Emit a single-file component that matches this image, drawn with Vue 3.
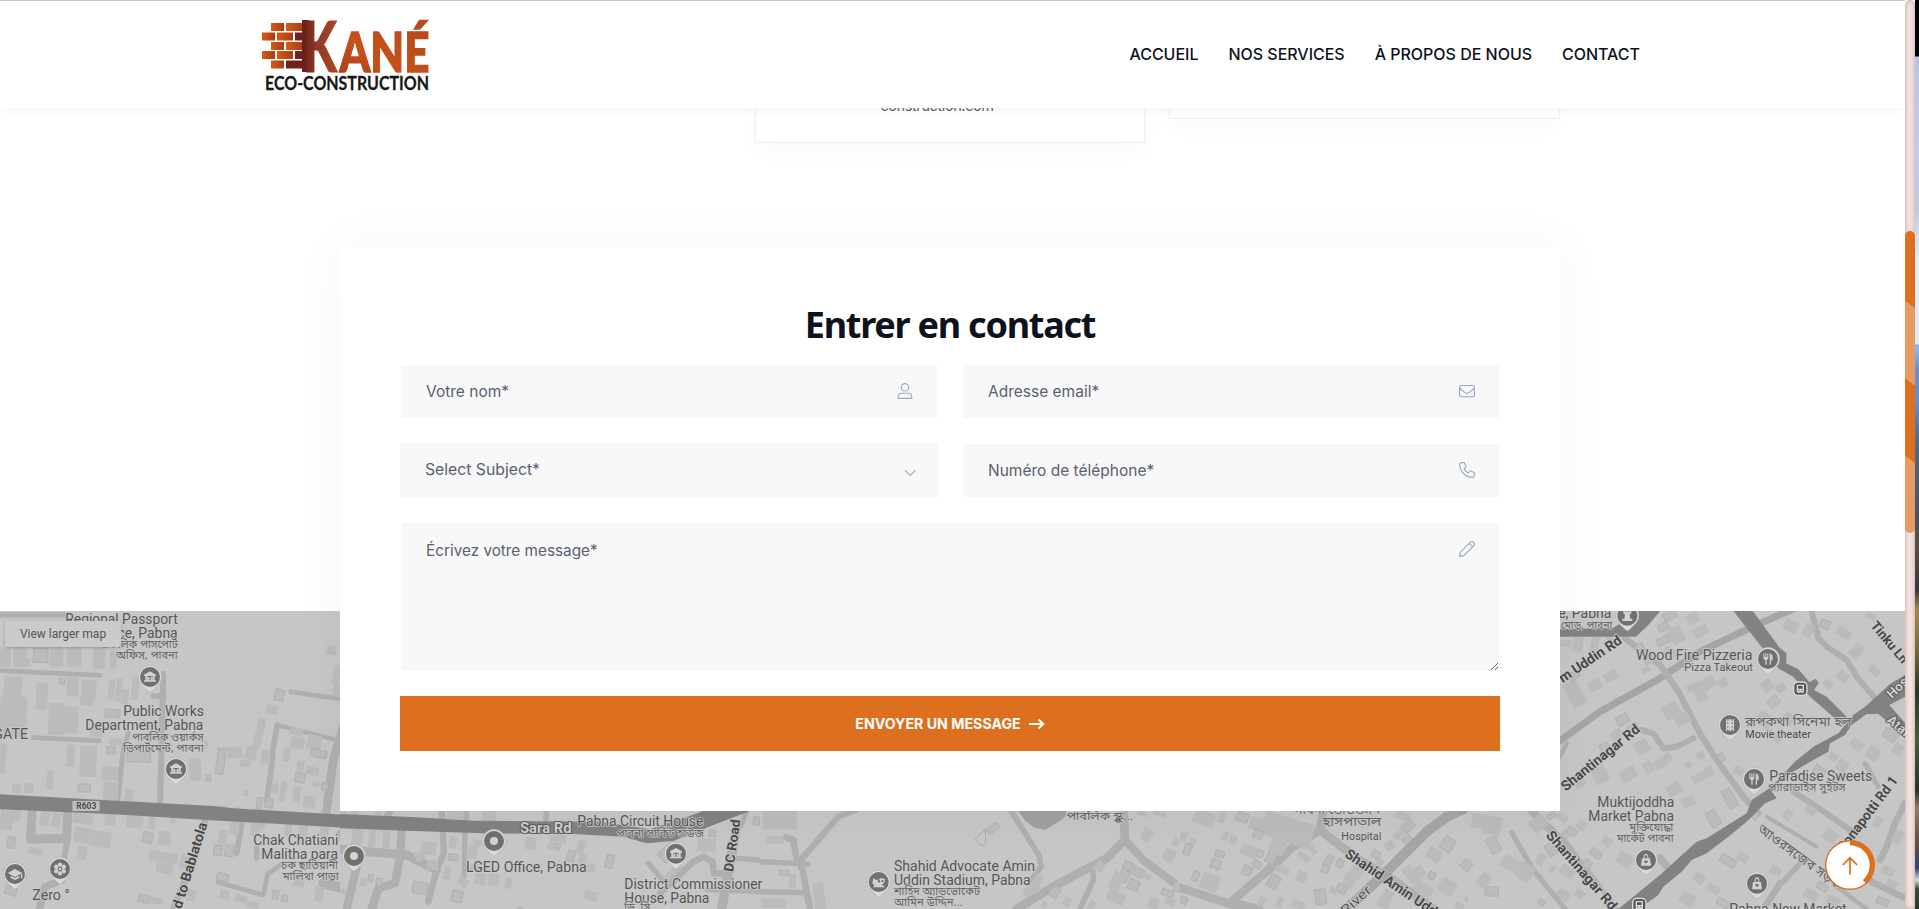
<script setup>
const nav = ['ACCUEIL', 'NOS SERVICES', 'À PROPOS DE NOUS', 'CONTACT']

const bricks = [
  [271, 23, 13, 0], [286, 23, 17, 0], [262, 32.5, 13, 0], [277, 32.5, 16, 0], [295, 32.5, 9, 1],
  [271, 42, 13, 0], [286, 42, 17, 0], [262, 51, 13, 0], [277, 51, 16, 0], [295, 51, 9, 1],
  [271, 60.5, 13, 0], [286, 60.5, 18, 1],
]

// Each tile is drawn at three units per pixel from its own origin.
// roads: [points, width, tone]; blocks: [x, y, w, h, angle, outlined]
// labels: [text, x, y, width, size, kind, angle]; pins: [x, y, icon]
const tiles = [
  {
    x: 0, y: 600, w: 1020, h: 927, clipY: 0,
    areas: ['0,583 200,594 640,618 700,625 1050,645 1050,684 660,662 340,643 0,628'],
    roads: [
      ['0,45 195,45', 16], ['0,212 300,226', 14], ['100,413 298,422', 14], ['490,222 480,610', 18],
      ['385,400 370,450 353,605', 15], ['460,288 492,288', 17], ['872,275 1020,297', 14], ['832,375 1000,418', 14],
      ['832,375 820,440 812,520 800,600', 17], ['1045,330 1000,480 978,645', 26],
      ['96,640 92,718 200,715 203,640', 27], ['203,715 190,790', 18], ['185,840 135,860 118,927', 22],
      ['725,670 710,760', 17], ['770,740 770,775', 16], ['653,847 790,885 803,822 842,795', 14],
      ['615,665 560,830 520,927', 20], ['970,850 1050,870', 30], ['1020,700 1050,770', 20],
    ],
    blocks: [
      [100, 145, 44, 43, 2, 1], [40, 140, 40, 62, 3], [150, 140, 40, 60, 2], [200, 140, 45, 60, 2], [280, 140, 36, 66, 2],
      [330, 152, 20, 55, 2], [0, 145, 32, 55, 2], [10, 230, 55, 90, 4], [0, 290, 80, 120, 2], [108, 248, 35, 80, 3],
      [145, 310, 48, 95, 2], [190, 320, 45, 80, 2], [200, 230, 35, 60, 2], [245, 240, 44, 55, 2], [178, 235, 16, 17, 2, 1],
      [325, 238, 18, 60, 5], [348, 235, 18, 70, 6], [365, 268, 20, 45, 5], [395, 230, 22, 70, 6], [240, 290, 40, 26, 5],
      [315, 328, 45, 24, 3, 1], [330, 415, 36, 20, 2], [320, 440, 26, 22, 2, 1], [382, 450, 70, 36, 2, 1], [200, 435, 24, 65, 3],
      [240, 438, 50, 92, 2], [140, 512, 20, 56, 3], [235, 552, 36, 24, 2, 1], [0, 430, 18, 90, 3], [35, 552, 28, 26, 3],
      [72, 550, 28, 30, 3], [305, 500, 50, 40, 6], [310, 545, 45, 55, 4], [375, 568, 25, 35, 3], [568, 474, 35, 68, -3],
      [610, 422, 14, 25, 12], [618, 526, 14, 18, -5, 1], [650, 445, 24, 78, 8, 1], [825, 268, 26, 34, 15, 1],
      [798, 315, 35, 26, 15], [766, 355, 24, 90, 13], [682, 440, 46, 34, -3], [735, 438, 35, 42, 12], [720, 480, 30, 20, 8],
      [783, 450, 28, 42, 4], [870, 382, 40, 24, 15], [872, 412, 42, 35, 12], [922, 405, 42, 44, 10], [850, 445, 20, 40, 10],
      [932, 450, 48, 22, 12, 1], [890, 482, 22, 40, 10], [918, 500, 38, 25, 15], [885, 520, 30, 28, 10, 1], [937, 544, 20, 18, 8],
      [965, 548, 20, 22, 7, 1], [840, 545, 18, 60, 10], [880, 560, 22, 45, 8], [910, 588, 35, 35, 10], [770, 592, 16, 38, 8, 1],
      [730, 568, 15, 20, 8], [815, 550, 20, 30, 8], [795, 595, 24, 28, 8, 1], [980, 138, 30, 27, 12], [1000, 195, 20, 55, 15], [1000, 250, 20, 40, 8],
      [120, 635, 28, 42, 12], [155, 638, 28, 42, 12], [22, 710, 24, 34, 10, 1], [0, 630, 40, 60, 8], [35, 618, 28, 45, 8],
      [218, 642, 60, 30, 7], [222, 682, 48, 46, 8], [315, 635, 32, 42, 8], [380, 645, 50, 40, 5], [270, 694, 62, 48, 8],
      [232, 737, 28, 42, 8], [85, 744, 42, 20, 14], [445, 650, 20, 38, 7], [428, 697, 30, 32, 14, 1], [475, 694, 36, 42, 8], [510, 645, 16, 26, 8],
      [448, 755, 85, 32, 9], [540, 765, 50, 45, 12], [468, 790, 50, 30, 14], [415, 885, 34, 22, 14, 1], [452, 893, 35, 20, 12], [560, 868, 25, 34, 14],
      [642, 735, 24, 32, 8, 1], [675, 735, 26, 34, 8, 1], [655, 690, 26, 42, 8], [690, 660, 28, 45, 8], [752, 662, 28, 45, 8], [650, 820, 35, 24, 18, 1],
      [660, 870, 28, 28, 12], [705, 885, 36, 22, 16], [740, 905, 36, 20, 13], [818, 872, 18, 25, 8, 1], [845, 885, 18, 20, 8, 1], [854, 670, 22, 40, 9],
      [895, 665, 28, 46, 8], [960, 680, 25, 34, 10], [780, 655, 18, 32, 8], [880, 838, 32, 22, 12], [945, 860, 25, 45, 10], [15, 860, 35, 25, 16, 1],
      [655, 615, 25, 22, 2], [704, 620, 18, 22, 2], [270, 380, 40, 30, 3], [75, 175, 17, 24, 2],
    ],
    labels: [
      ['Regional Passport', 533, 72, 337, 43, 'end'], ['Office, Pabna', 533, 114, 245, 43, 'end'],
      ['আঞ্চলিক পাসপোর্ট', 533, 144, 245, 33, 'end bn'], ['অফিস, পাবনা', 533, 177, 185, 33, 'end bn'],
      ['Public Works', 612, 348, 242, 43, 'end'], ['Department, Pabna', 610, 390, 354, 43, 'end'],
      ['পাবলিক ওয়ার্কস', 611, 423, 214, 33, 'end bn'], ['ডিপার্টমেন্ট, পাবনা', 611, 456, 242, 33, 'end bn'],
      ['GATE', 84, 417, 104, 42, 'end'], ['Zero °', 97, 900, 112, 42, ''],
      ['Chak Chatiani', 1015, 735, 255, 43, 'end'], ['Malitha para', 1014, 777, 230, 43, 'end'],
      ['চক ছাতিয়ানী', 1014, 807, 170, 33, 'end bn'], ['মালিথা পাড়া', 1016, 839, 168, 33, 'end bn'],
      ['Road to Bablatola', 522, 1001, 344, 42, 'bold', -73],
    ],
    pins: [[450, 231, 'bank'], [528, 507, 'bank'], [45, 822, 'cap'], [180, 807, 'flower']],
    shield: [217, 603, 82, 30, 'R603'],
  },
  {
    x: 340, y: 790, w: 1260, h: 357, clipY: 63,
    areas: ['0,72 230,82 400,92 780,95 930,118 1030,85 1090,63 1230,63 1120,105 1000,153 920,160 850,140 700,132 430,130 200,122 0,115'],
    roads: [
      ['0,178 200,195 290,240', 27], ['185,120 180,200 165,280 115,295 95,357', 25], ['50,230 20,357', 25],
      ['305,63 312,190 290,240 265,335', 19], ['375,130 372,258', 15], ['150,63 135,90', 20], ['380,63 378,90', 16], ['620,63 617,90', 16],
      ['925,220 985,290', 16], ['960,310 1060,215 1090,200 1117,215 1122,250 1150,250', 20], ['1187,205 1260,210', 16], ['1185,140 1145,357', 28], ['1100,300 1260,305', 14], ['1220,63 1200,110', 16],
    ],
    blocks: [
      [0, 63, 22, 10, 0], [32, 63, 24, 12, 0], [105, 63, 18, 12, 0], [322, 63, 48, 25, 3], [427, 63, 42, 36, -6], [35, 118, 34, 50, 5], [86, 122, 20, 50, 5], [128, 122, 22, 55, 5],
      [245, 155, 44, 40, 4], [328, 140, 22, 36, 10], [225, 185, 28, 27, -30], [325, 192, 28, 20, 8, 1], [260, 210, 35, 30, 3], [310, 230, 22, 38, 12],
      [218, 277, 46, 34, 8, 1], [335, 302, 32, 34, 14, 1], [352, 262, 32, 26, 35], [404, 250, 34, 34, 10], [445, 252, 30, 35, 8], [495, 262, 20, 34, 6],
      [384, 165, 28, 42, 8], [400, 150, 25, 18, 8], [390, 222, 28, 24, 8], [555, 142, 34, 36, 4], [627, 135, 20, 45, 20], [650, 135, 28, 22, 18],
      [645, 160, 15, 20, 15, 1], [682, 182, 22, 32, 18, 1], [712, 150, 22, 42, 18], [715, 192, 24, 32, 18], [740, 222, 26, 24, 10], [798, 194, 22, 40, 12, 1],
      [732, 303, 42, 30, 18], [530, 348, 20, 10, 5], [965, 160, 38, 55, 48, 1], [970, 235, 60, 20, -45], [1072, 145, 55, 40, 4], [1107, 120, 20, 20, 4, 1], [1240, 80, 20, 25, 3, 1], [85, 254, 14, 22, 5, 1], [108, 265, 18, 22, 5, 1], [60, 262, 20, 26, 5],
      [0, 296, 16, 17, -30], [580, 220, 24, 15, 12],
    ],
    labels: [
      ['Sara Rd', 540, 129, 155, 43, 'bold light'], ['Pabna Circuit House', 712, 108, 378, 43, ''], ['পাবনা সার্কিট হাউজ', 830, 142, 262, 31, 'bn'],
      ['LGED Office, Pabna', 378, 247, 362, 43, ''], ['District Commissioner', 853, 298, 414, 43, ''], ['House, Pabna', 853, 339, 255, 43, ''],
      ['ডি. সি.', 853, 362, 86, 31, 'bn'], ['DC Road', 1179, 247, 158, 40, 'bold', -82],
    ],
    pins: [[42, 198, 'dot'], [462, 153, 'dot'], [1008, 191, 'bank']],
  },
  {
    x: 760, y: 790, w: 1260, h: 357, clipY: 63,
    areas: [],
    water: ['775,63 920,63 915,82 880,105 855,119 825,114 795,92'],
    roads: [
      ['0,215 142,222', 17], ['78,142 100,150 108,200 128,240 150,357', 20], ['118,215 235,80 290,58', 19], ['0,305 130,308', 17],
      ['750,58 838,198 843,230 815,270', 17], ['770,357 880,290 1040,205 1095,150 1090,63', 26], ['1095,150 1150,210 1270,300', 24], ['998,235 1000,270 960,357', 17],
    ],
    blocks: [
      [8, 63, 102, 55, 0], [20, 138, 50, 23, -1], [58, 242, 30, 15, 4, 1], [88, 252, 20, 42, 4], [5, 325, 72, 28, 1], [162, 277, 32, 82, -7],
      [680, 105, 38, 20, -40, 1], [820, 255, 25, 35, 30], [790, 285, 50, 30, -30], [870, 290, 28, 32, 35, 1], [1005, 215, 28, 30, 35],
      [1090, 215, 30, 25, 25, 1], [1078, 240, 28, 36, 25, 1], [1120, 235, 30, 25, 25, 1], [1052, 245, 35, 55, 28], [1105, 270, 32, 30, 22, 1], [1145, 250, 30, 18, 20],
      [1040, 305, 55, 34, 24], [985, 330, 20, 30, 30], [910, 322, 22, 28, 30], [1145, 115, 30, 38, 30], [1180, 63, 38, 16, 20], [1210, 178, 36, 38, 28], [1238, 145, 20, 25, 25],
      [1205, 300, 35, 18, 18, 1], [1165, 325, 30, 30, 18], [1240, 275, 24, 32, 18], [1215, 325, 30, 20, 18], [845, 335, 14, 20, 30], [1130, 63, 30, 15, 20],
    ],
    outline: '645,149 675,118 678,155 667,169',
    labels: [
      ['Shahid Advocate Amin', 402, 243, 423, 43, ''], ['Uddin Stadium, Pabna', 402, 285, 410, 43, ''], ['শাহিদ অ্যাডভোকেট', 402, 314, 258, 32, 'bn'], ['আমিন উদ্দিন...', 402, 347, 206, 32, 'bn'], ['পাবলিক স্কুল...', 920, 90, 200, 33, 'bn'],
    ],
    pins: [[356, 276, 'tiger']],
  },
  {
    x: 1180, y: 790, w: 1200, h: 357, clipY: 63,
    areas: [],
    roads: [
      ['-10,290 130,335 190,357', 25], ['160,330 290,218 340,170 420,120', 26], ['430,63 420,120 530,205 640,270 760,357', 26],
      ['480,377 630,235 740,125 800,80 850,58', 30, 'river'], ['995,128 1060,240 1155,357', 16], ['1055,63 1120,130 1205,240', 24], ['420,120 360,160', 24], ['180,340 240,357', 20],
    ],
    blocks: [
      [40, 65, 65, 40, 20], [245, 82, 155, 75, 18], [115, 68, 20, 32, 18], [125, 125, 20, 28, 25], [148, 135, 22, 28, 25], [207, 82, 44, 38, 15], [170, 68, 35, 28, 20, 1],
      [220, 120, 28, 25, 20, 1], [105, 182, 28, 20, 18, 1], [92, 208, 30, 28, 20, 1], [182, 165, 48, 34, 20], [230, 180, 20, 22, 25, 1], [258, 190, 28, 30, 25, 1], [217, 212, 28, 20, 35, 1],
      [188, 228, 26, 28, 25, 1], [270, 138, 48, 55, 20], [285, 230, 42, 20, 20], [265, 255, 32, 40, 30, 1], [62, 252, 55, 48, 20], [38, 244, 18, 30, 20, 1], [352, 190, 40, 20, 35], [350, 243, 30, 35, 25], [0, 125, 22, 28, 20], [25, 145, 20, 28, 20], [12, 162, 20, 34, 20, 1],
      [390, 165, 18, 30, -30], [435, 195, 22, 35, 30, 1], [425, 225, 22, 24, 25, 1], [470, 207, 20, 25, 25, 1], [490, 255, 35, 38, 25], [470, 285, 30, 24, 30, 1], [405, 297, 33, 46, -8, 1], [448, 292, 24, 20, 25], [510, 230, 38, 32, 35],
      [575, 182, 25, 22, 35, 1], [590, 208, 20, 20, 35], [615, 155, 30, 25, -35], [665, 96, 38, 26, -40, 1], [668, 138, 26, 20, -35, 1], [645, 65, 45, 25, 25], [640, 125, 30, 20, -40],
      [785, 142, 36, 42, 35, 1], [740, 175, 45, 38, 32], [845, 210, 28, 30, 40, 1], [925, 140, 32, 50, -28, 1], [875, 75, 90, 45, 10], [905, 112, 55, 22, 15], [965, 200, 48, 40, 30], [1008, 220, 52, 50, 32],
      [895, 250, 32, 42, 45], [915, 290, 40, 28, 4, 1], [778, 268, 48, 45, 35], [680, 235, 55, 35, -35], [745, 246, 20, 22, 30, 1], [665, 230, 30, 18, -35], [700, 280, 60, 35, 35], [852, 320, 14, 14, 35], [825, 338, 26, 20, 25],
      [1050, 82, 48, 40, -40], [1100, 70, 28, 15, -35, 1], [1145, 35, 20, 24, -40, 1], [1070, 190, 25, 35, 35], [1100, 160, 25, 38, -35, 1], [1145, 120, 26, 25, 35], [1105, 230, 24, 14, -40], [1075, 330, 20, 14, 35, 1], [235, 320, 20, 30, 25], [290, 320, 18, 32, 20], [335, 332, 40, 24, 20], [0, 320, 22, 22, 25, 1], [605, 300, 32, 40, 30], [590, 335, 35, 18, 35],
    ],
    labels: [
      ['পাবনা ডেভিডসন', 600, 72, 260, 35, 'end bn'], ['হাসপাতাল', 604, 109, 176, 38, 'end bn'], ['Hospital', 604, 149, 120, 33, 'end'],
      ['Shahid Amin Uddin Rd', 492, 199, 418, 42, 'bold', 34], ['River', 497, 377, 108, 40, '', -42], ['Shantinagar Rd', 1096, 138, 300, 42, 'bold', 49],
    ],
    pins: [],
  },
  {
    x: 1550, y: 600, w: 1065, h: 927, clipY: 33,
    areas: [
      '550,33 608,33 690,145 710,160 708,190 745,208 778,246 798,236 806,250 792,270 830,290 890,350 878,375 780,290 730,230 685,205',
      '1065,225 1020,252 990,280 945,320 910,345 865,400 790,440 735,485 665,560 605,600 590,640 470,715 440,725 330,825 205,927 265,927 325,885 340,860 395,815 425,780 470,760 535,710 590,665 605,650 645,610 680,595 665,575 700,530 730,515 790,480 835,455 840,430 885,405 905,375 950,342 985,342 1065,408 1065,368 1018,315 1065,290',
      '30,88 190,84 225,60 265,33 330,33 300,70 258,110 30,110',
    ],
    roads: [
      ['30,422 95,375 150,335 330,235 450,155 620,75 740,22', 21, 'river'], ['225,115 330,195 385,275 450,400 500,480 580,590 625,640', 19],
      ['785,33 805,115 830,140 890,180 920,230 975,295', 18], ['275,390 310,400 340,445 380,440 430,415', 18], ['30,470 50,430', 14],
      ['730,575 800,620 900,690', 18], ['1065,610 1035,670 1010,740 990,780', 20], ['955,840 1065,895', 20], ['650,650 800,740', 12],
      ['690,850 640,927', 20], ['700,845 750,790', 17], ['945,490 985,560', 15], ['860,860 950,927', 14], ['330,775 360,810', 24], ['0,680 50,730 200,927', 15],
    ],
    blocks: [
      [120, 110, 24, 68, 12], [68, 112, 30, 45, 10], [30, 120, 34, 20, 0], [165, 112, 24, 30, 15], [280, 155, 28, 35, -20, 1], [320, 110, 42, 22, -25, 1], [360, 80, 40, 50, -30], [325, 70, 30, 22, -25, 1],
      [340, 35, 38, 24, -25, 1], [410, 40, 35, 30, -25], [430, 80, 44, 28, -30], [260, 130, 24, 35, -25, 1], [275, 200, 25, 18, -30], [340, 145, 40, 26, 30], [55, 215, 34, 22, -30, 1], [42, 245, 45, 34, -30], [60, 275, 45, 45, -30], [115, 240, 40, 32, -25], [160, 215, 42, 28, -30],
      [425, 240, 75, 36, -35], [520, 160, 45, 24, -25], [440, 285, 35, 18, -30], [505, 235, 28, 28, -30], [410, 250, 40, 20, -25], [635, 240, 34, 35, -35], [655, 292, 32, 26, -40, 1], [680, 255, 24, 18, -35, 1],
      [200, 345, 36, 28, -30, 1], [230, 370, 36, 25, -30], [180, 390, 38, 28, -30], [255, 420, 42, 40, -30], [150, 430, 28, 24, -30, 1], [310, 470, 58, 28, -35], [340, 310, 48, 44, -30], [210, 505, 50, 36, -30], [280, 485, 30, 35, -30], [375, 340, 44, 34, -30], [405, 485, 20, 20, -30], [440, 455, 24, 22, -25],
      [425, 520, 48, 24, -30], [465, 500, 24, 28, -30], [350, 550, 45, 35, -30], [395, 590, 40, 30, -25], [125, 490, 45, 60, -30], [70, 530, 35, 32, -30], [295, 590, 35, 28, -30], [505, 460, 18, 24, -30, 1], [525, 565, 28, 60, -28, 1], [475, 632, 30, 48, -30, 1], [550, 500, 30, 24, 30],
      [620, 340, 50, 42, 35], [700, 340, 34, 30, 35], [650, 400, 45, 20, 40], [820, 240, 30, 22, 38], [760, 70, 30, 42, 25], [700, 60, 44, 35, 25], [810, 60, 30, 25, 25, 1], [860, 85, 45, 28, 35], [905, 130, 30, 45, 40], [955, 200, 35, 24, 40], [860, 215, 35, 30, 35], [950, 40, 28, 18, 35],
      [1000, 390, 42, 30, 35, 1], [950, 440, 38, 40, 35], [860, 480, 34, 35, 35], [900, 420, 40, 28, 35], [1030, 430, 28, 34, 30], [790, 500, 35, 25, 35, 1], [835, 460, 28, 22, 30], [765, 620, 35, 24, 30], [820, 690, 42, 35, 35], [700, 630, 25, 30, 35], [610, 635, 14, 24, 30, 1],
      [20, 640, 34, 24, 35], [80, 660, 28, 30, 35], [50, 685, 30, 20, 35, 1], [30, 800, 45, 30, 35], [75, 870, 28, 25, 35], [20, 870, 40, 28, 35], [120, 750, 35, 22, 35, 1], [200, 760, 48, 38, 35], [155, 710, 30, 28, 35], [100, 780, 24, 24, 35, 1],
      [430, 820, 35, 28, 35], [510, 770, 48, 25, 30, 1], [470, 855, 40, 24, 30], [390, 880, 45, 35, 30], [560, 760, 35, 24, 30], [500, 900, 42, 20, 30, 1], [660, 800, 35, 26, 30], [800, 850, 34, 20, 30, 1], [760, 870, 45, 30, 30], [880, 780, 38, 30, 30], [995, 800, 38, 25, 25], [1010, 840, 32, 24, 25], [830, 890, 40, 28, 30], [980, 895, 35, 20, 25, 1], [1030, 690, 28, 42, 28], [970, 650, 24, 32, 30],
    ],
    labels: [
      ['Office, Pabna', 184, 55, 246, 43, 'end'], ['বাস মোড়, পাবনা', 187, 86, 210, 33, 'end bn'], ['Wood Fire Pizzeria', 258, 180, 349, 43, ''], ['Pizza Takeout', 403, 214, 206, 33, ''],
      ['রূপকথা সিনেমা হল', 585, 378, 320, 39, 'bn'], ['Movie theater', 586, 413, 197, 33, 'deep'], ['Paradise Sweets', 658, 542, 309, 43, ''], ['প্যারাডাইস সুইটস', 655, 574, 232, 33, 'bn'],
      ['Muktijoddha', 373, 621, 231, 43, 'end'], ['Market Pabna', 372, 663, 257, 43, 'end'], ['মুক্তিযোদ্ধা', 370, 694, 132, 33, 'end bn'], ['মার্কেট পাবনা', 371, 726, 170, 33, 'end bn'],
      ['Pabna New Market', 538, 941, 352, 43, ''], ['m Uddin Rd', 38, 250, 218, 42, 'bold', -34], ['Shantinagar Rd', 47, 575, 290, 42, 'bold', -39],
      ['Shantinagar Rd', -14, 707, 300, 42, 'bold', 49], ['Tinku Ln', 960, 78, 150, 40, 'bold', 50], ['Hospital', 1026, 298, 150, 40, 'bold light', -44], ['Ataikula', 1008, 364, 150, 40, 'bold light', 40],
      ['Sonapotti Rd 1', 883, 757, 270, 42, 'bold', -53], ['আওরঙ্গজেব সড়ক', 620, 693, 300, 40, 'bn', 36],
    ],
    pins: [[232, 47, 'rook'], [654, 177, 'food'], [540, 375, 'film'], [612, 537, 'food'], [288, 780, 'bag'], [621, 851, 'bag']],
    stops: [[751, 266], [268, 915]],
  },
]
const rot = (b) => (b[4] ? `rotate(${b[4]} ${b[0] + b[2] / 2} ${b[1] + b[3] / 2})` : null)
</script>

<template>
  <div class="screen">
    <main class="page">
      <header class="header">
        <svg class="logo" viewBox="260 14 172 80" role="img" aria-label="Kané Eco-construction">
          <defs>
            <linearGradient id="brick" x1="0" x2="1"><stop offset="0" stop-color="#d95a18" /><stop offset="1" stop-color="#a83c16" /></linearGradient>
            <linearGradient id="kGrad" x1="0" x2="1"><stop offset="0" stop-color="#6b211b" /><stop offset=".4" stop-color="#8f3a25" /><stop offset="1" stop-color="#ad4422" /></linearGradient>
            <linearGradient id="aGrad" x1="0" y1="1" x2="1" y2="0"><stop offset="0" stop-color="#a63c1e" /><stop offset=".4" stop-color="#c85018" /><stop offset="1" stop-color="#b04820" /></linearGradient>
          </defs>
          <rect v-for="(b, i) in bricks" :key="i" :x="b[0]" :y="b[1]" :width="b[2]" height="8" :fill="b[3] ? '#70211b' : 'url(#brick)'" />
          <rect x="302" y="20" width="7" height="52" fill="#6b211b" />
          <text x="303" y="71.500" class="logo-k" textLength="34" lengthAdjust="spacingAndGlyphs">K</text>
          <text x="339.500" y="71.500" class="logo-ane" textLength="90" lengthAdjust="spacingAndGlyphs">ANÉ</text>
          <text x="265" y="89.500" class="logo-sub" textLength="164" lengthAdjust="spacingAndGlyphs">ECO-CONSTRUCTION</text>
        </svg>
        <nav class="nav"><a v-for="n in nav" :key="n">{{ n }}</a></nav>
      </header>

      <section class="info">
        <div class="info-card tall"><span>construction.com</span></div>
        <div class="info-card"></div>
      </section>

      <section class="contact">
        <form class="form" @submit.prevent>
          <h2>Entrer en contact</h2>
          <div class="fields">
            <label class="field">
              <input type="text" placeholder="Votre nom*" />
              <svg viewBox="0 0 16 16"><circle cx="8" cy="4.3" r="3.7" /><path d="M1.2 15.4v-1.2c0-2.4 1.9-4 4.2-4h5.2c2.3 0 4.2 1.6 4.2 4v1.2z" /></svg>
            </label>
            <label class="field">
              <input type="text" placeholder="Adresse email*" />
              <svg viewBox="0 0 16 16"><rect x=".6" y="2.5" width="14.800" height="11.200" rx="1.600" /><path d="M.6 5.2l5.5 4.4c1.2.9 2.6.9 3.8 0l5.5-4.4" /></svg>
            </label>
            <div class="field select">
              <span>Select Subject*</span>
              <svg viewBox="0 0 16 16"><path d="M3 5.4l5.2 5.1 5.2-5.1" /></svg>
            </div>
            <label class="field low">
              <input type="text" placeholder="Numéro de téléphone*" />
              <svg viewBox="0 0 16 16"><path d="M1.4 1.1l3-.7c.5-.1.9.1 1.1.6l1.4 3.2c.2.4.1.8-.3 1.1L5 6.8c1 2 2.3 3.3 4.3 4.3l1.4-1.7c.3-.4.7-.5 1.1-.3l3.2 1.4c.5.2.7.6.6 1.1l-.7 3c-.1.500-.5.800-1 .8C6.600 15.400.6 9.400.6 2.100c0-.5.3-.9.8-1z" /></svg>
            </label>
            <label class="field message">
              <textarea placeholder="Écrivez votre message*"></textarea>
              <svg viewBox="0 0 16 16"><path d="M.6 15.400l.8-4.200L11.700.9c.6-.6 1.600-.6 2.200 0l1.200 1.200c.6.6.6 1.600 0 2.200L4.800 14.600zM10.200 2.400L13.600 5.800" /></svg>
            </label>
          </div>
          <button class="send">
            <span>ENVOYER UN MESSAGE</span>
            <svg viewBox="0 0 16 12"><path d="M0 6h14M9.500 1.500L14.300 6l-4.800 4.500" /></svg>
          </button>
        </form>
      </section>

      <section class="map">
        <svg viewBox="0 611 1905 298" class="map-art">
          <defs>
            <clipPath v-for="(t, i) in tiles" :id="'tile' + i" :key="i"><rect x="0" :y="t.clipY" :width="t.w" :height="t.h - t.clipY" /></clipPath>
          </defs>
          <rect x="0" y="611" width="1905" height="298" fill="#c6c6c6" />
          <g v-for="(t, i) in tiles" :key="i" :transform="`translate(${t.x} ${t.y}) scale(.33333)`">
            <g :clip-path="`url(#tile${i})`">
              <polygon v-for="(p, k) in t.water || []" :key="'w' + k" :points="p" fill="#a0a0a0" />
              <polyline v-for="(r, k) in t.roads" :key="'r' + k" :points="r[0]" :stroke-width="r[1]" class="road" :class="r[2]" />
              <rect v-for="(b, k) in t.blocks" :key="'b' + k" :x="b[0]" :y="b[1]" :width="b[2]" :height="b[3]" :transform="rot(b)" class="block" :class="{ lined: b[5] }" />
              <polygon v-for="(p, k) in t.areas" :key="'a' + k" :points="p" fill="#828282" />
              <polygon v-if="t.outline" :points="t.outline" fill="none" stroke="#a8a8a8" stroke-width="3" />
              <g v-if="t.shield">
                <rect :x="t.shield[0]" :y="t.shield[1]" :width="t.shield[2]" :height="t.shield[3]" rx="3" fill="#bcbcbc" />
                <text :x="t.shield[0] + 12" :y="t.shield[1] + 24" font-size="26" textLength="60" lengthAdjust="spacingAndGlyphs" class="bold">{{ t.shield[4] }}</text>
              </g>
            </g>
          </g>
          <g v-for="(t, i) in tiles" :key="'l' + i" :transform="`translate(${t.x} ${t.y}) scale(.33333)`">
            <g>
              <text v-for="(l, k) in t.labels" :key="k" :x="l[1]" :y="l[2]" :textLength="l[3]" lengthAdjust="spacingAndGlyphs" :font-size="l[4]" :class="l[5]" :transform="l[6] ? `rotate(${l[6]} ${l[1]} ${l[2]})` : null">{{ l[0] }}</text>
              <g v-for="(p, k) in t.pins" :key="'p' + k" :transform="`translate(${p[0]} ${p[1]})`">
                <path d="M-24 25L-5 43Q0 48 5 43L24 25A35 35 0 1 0-24 25z" class="pin-edge" />
                <circle r="30" fill="#707070" />
                <g class="glyph">
                  <path v-if="p[2] === 'bank'" d="M-18-7L0-17 18-7V-3H-18zM-14-3h6v13h-6zM8-3h6v13H8zM-7 0h5v10h-5zM2 0h5v10H2zM-18 10h36v4h-36z" />
                  <path v-else-if="p[2] === 'cap'" d="M-22-3L0-15 22-3 0 9zM-13 5L0 12 13 5v7L0 18-13 12zM18-1h4v14h-4z" />
                  <g v-else-if="p[2] === 'flower'"><circle v-for="n in 6" :key="n" cy="-13" r="6.500" :transform="`rotate(${n * 60})`" /><circle r="4" /></g>
                  <circle v-else-if="p[2] === 'dot'" r="12" />
                  <path v-else-if="p[2] === 'food'" d="M-14-17h3v11h3v-11h3v11h3v-11h3v14q-1 5-5 6v14h-4V3q-5-1-6-6zM5 17V-17q9 3 9 13v8h-5v13z" />
                  <path v-else-if="p[2] === 'film'" d="M-12-17h4v4h3v-4H5v4h3v-4h4v34H8v-4H5v4H-5v-4h-3v4h-4zM-8-8v5h3v-5zM5-8v5h3v-5zM-8 3v5h3V3zM5 3v5h3V3z" fill-rule="evenodd" />
                  <path v-else-if="p[2] === 'bag'" d="M-12-5h5v-5q1-9 7-9t7 9v5h5l3 22h-30zM-4-5h8v-5q0-5-4-5t-4 5zM-6 2q1 8 6 8t6-8z" fill-rule="evenodd" />
                  <path v-else-if="p[2] === 'rook'" d="M-12-16h6v5h4v-5h4v5h4v-5h6v9l-5 4 2 12h6v7h-30V9h6l2-12-5-4z" />
                  <path v-else d="M-16-12l6 5h10l7-5 12 3-3 12-7 5 8 5v3H-17L-13 9l-6-5zM1-6a4 4 0 1 0 .1 0zM11-6a3 3 0 1 0 .1 0z" fill-rule="evenodd" />
                </g>
              </g>
              <g v-for="(s, k) in t.stops || []" :key="'s' + k" :transform="`translate(${s[0]} ${s[1]})`">
                <rect x="-20" y="-20" width="40" height="40" rx="13" fill="#555" stroke="#ddd" stroke-width="4" />
                <path d="M-11-12h22v23h-4v3H3v-3h-6v3h-4v-3h-4zM-7-8v8H7v-8zM-7 4v3h4V4zM3 4v3h4V4z" fill="#ddd" fill-rule="evenodd" />
              </g>
            </g>
          </g>
        </svg>
        <a class="larger">View larger map</a>
      </section>

      <a class="to-top">
        <svg viewBox="0 0 50 50">
          <circle cx="25" cy="25" r="24.300" fill="#fff" stroke="#dd6f1f" stroke-width="1.400" />
          <path d="M25 2.800A22.200 22.200 0 0 1 39.500 41.800" fill="none" stroke="#dd6f1f" stroke-width="5" />
          <path d="M25 34.500V18.200M17.800 25L25 17.800 32.200 25" fill="none" stroke="#dd6f1f" stroke-width="1.700" />
        </svg>
      </a>
    </main>
    <div class="track"><div class="thumb"></div></div>
    <div class="desktop"></div>
  </div>
</template>

<style>
html, body { margin: 0; overflow: hidden; }
</style>

<style scoped>
.screen { display: flex; width: 1919px; height: 909px; overflow: hidden; background: #fff; font-family: Inter, "Liberation Sans", sans-serif; }
.screen * { box-sizing: border-box; }
.page { position: relative; width: 1905px; height: 909px; overflow: hidden; }
.header { position: relative; z-index: 5; display: flex; justify-content: space-between; height: 108px; padding: 13px 265px 0 260px; background: #fff; border-top: 1px solid #c8c8c8; box-shadow: 0 2px 8px rgba(0, 0, 0, .045); }
.logo { width: 172px; height: 80px; }
.logo text { font-family: Lato, sans-serif; font-weight: 900; }
.logo .logo-k { font-size: 71px; fill: url(#kGrad); stroke: url(#kGrad); stroke-width: 1; }
.logo .logo-ane { font-size: 56px; fill: url(#aGrad); stroke: url(#aGrad); stroke-width: 1.400; }
.logo .logo-sub { font-size: 18.500px; font-weight: 700; fill: #171919; stroke: #171919; stroke-width: .3; }
.nav { display: flex; gap: 30px; height: 80px; align-items: center; font-size: 16px; font-weight: 500; letter-spacing: -.02px; color: #0e121d; white-space: nowrap; }
.info { display: flex; gap: 24px; height: 139px; padding-left: 755px; align-items: flex-start; }
.info-card { width: 391px; height: 71px; margin-top: -60px; background: #fff; border: 1px solid #efeffa; box-shadow: 0 10px 20px rgba(0, 0, 0, .018); }
.info-card.tall { width: 390px; height: 95px; padding: 47px 26px 0 0; line-height: 20px; text-align: center; font-size: 14.500px; letter-spacing: -.4px; color: #596070; }
.info-card.tall span { padding-left: 0; }
.contact { position: relative; z-index: 2; height: 564px; padding-left: 340px; }
.form { width: 1220px; height: 564px; padding: 50px 60px 60px; background: #fff; box-shadow: 0 0 50px rgba(0, 0, 0, .045); }
.form h2 { height: 68px; margin: 0; line-height: 56px; text-align: center; font-family: "Noto Sans", sans-serif; font-size: 36px; font-weight: 700; letter-spacing: -1.250px; color: #0e121d; }
.fields { display: grid; grid-template-columns: 538px 538px; grid-template-rows: 53px 55px 148px; column-gap: 24px; row-gap: 25px; }
.field { position: relative; display: block; margin: 0 1px; }
.field input, .field textarea { display: block; width: 100%; height: 100%; margin: 0; padding: 0 25px; border: 0; border-radius: 0; outline: 0; background: #f8f8f8; font: 400 15.500px Inter, sans-serif; color: #596070; }
.field ::placeholder { color: #596070; opacity: 1; }
.low { margin: 1px; }
.field svg { position: absolute; right: 24px; top: 18px; width: 16px; height: 16px; fill: none; stroke: #9da8c9; stroke-width: 1.150; }
.select { margin: 0; padding: 0 25px; background: #f8f8f8; line-height: 53px; font-size: 15.750px; color: #596070; }
.select svg { right: 20px; top: 22px; }
.message { grid-column: 1 / 3; }
.field textarea { padding-top: 18px; resize: vertical; font-size: 15.300px; }
.send { display: flex; width: 1100px; height: 55px; margin-top: 25px; padding: 0; align-items: center; justify-content: center; gap: 8px; border: 0; background: #dd6f1f; color: #fff; font: 700 14.200px Inter, sans-serif; }
.send svg { width: 16px; height: 12px; fill: none; stroke: #fff; stroke-width: 2; }
.map { position: relative; height: 298px; margin-top: -200px; overflow: hidden; }
.map-art { display: block; width: 1905px; height: 298px; }
.road { fill: none; stroke: #afafaf; stroke-linecap: round; stroke-linejoin: round; }
.road.river { stroke: #a5a5a5; }
.block { fill: #bbb; }
.block.lined { stroke: #a9a9a9; stroke-width: 2; }
.map-art text { font-family: Roboto, "Noto Sans", sans-serif; fill: #555; stroke: #cbcbcb; stroke-width: 5px; stroke-linejoin: round; paint-order: stroke; }
.map-art text.end { text-anchor: end; }
.map-art text.bold { font-weight: 700; fill: #484848; }
.map-art text.light { fill: #cfcfcf; stroke: #505050; }
.map-art text.deep { fill: #484848; }
.map-art text.bn { font-family: "Noto Sans Bengali", "Noto Sans", sans-serif; fill: #636363; stroke-width: 4px; }
.pin-edge { fill: #dadada; stroke: #a5a5a5; stroke-width: 1.500; }
.glyph { fill: #d2d2d2; }
.larger { position: absolute; left: 5px; top: 10px; width: 116px; height: 26px; text-align: center; border-radius: 2px; background: #cbcbcb; box-shadow: 0 1px 3px rgba(0, 0, 0, .22); font: 400 12px/26px Roboto, sans-serif; color: #555; }
.to-top { position: absolute; z-index: 6; left: 1825px; top: 840px; width: 50px; height: 50px; }
.to-top svg { display: block; }
.track { width: 10px; height: 909px; padding-top: 231px; border-radius: 8px 8px 0 0; background: #f3e2df; box-shadow: inset 0 0 4px rgba(100, 60, 60, .4); }
.thumb { height: 302px; border-radius: 6px; background: linear-gradient(218deg, #dd6f1f 0 61px, #e89a62 61px 122px, #dd6f1f 122px 183px, #e89a62 183px); }
.desktop { width: 4px; background: linear-gradient(#000 56px, #b8c4e2 57px, #c4cce6 150px, #c5c7e0 210px, #e0eefa 260px, #dcebf8 344px, #83b6f0 345px 350px, #668fc8 370px 400px, #526b8e 440px, #465466 510px, #5c4a42 550px, #39383c 590px, #a18a4b 610px, #776b39 650px, #28352c 690px, #4a5d39 740px, #26332c 790px, #927d63 808px, #6a4f42 840px, #304273 868px, #d8d7dc 880px, #3d4a31 889px, #27372a); }
</style>
